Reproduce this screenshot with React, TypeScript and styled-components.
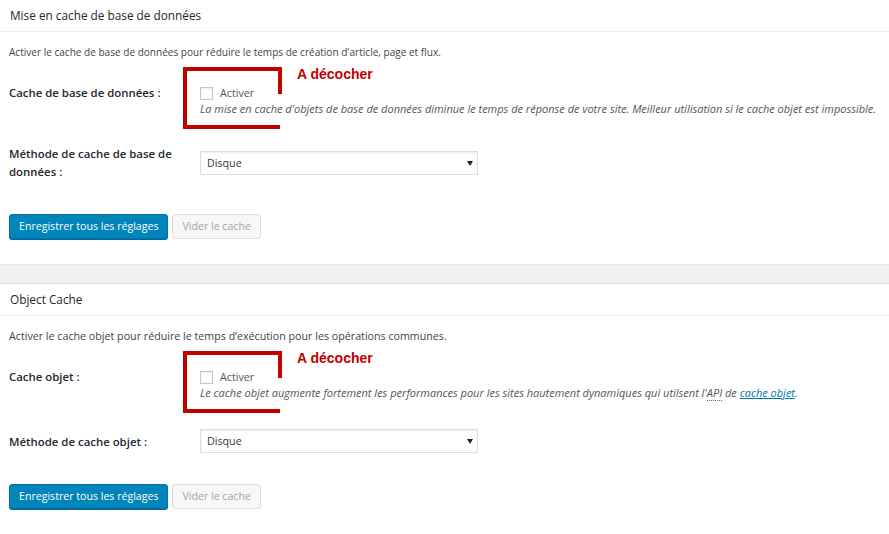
import React from "react";
import styled, { createGlobalStyle } from "styled-components";

const GlobalStyle = createGlobalStyle`
  html, body {
    margin: 0;
    padding: 0;
    background: #ffffff;
  }
  body {
    font-family: "Open Sans", "Noto Sans", sans-serif;
    color: #444;
  }
`;

const Page = styled.div`
  width: 889px;
  background: #f1f1f1;
  display: flex;
  flex-direction: column;
  gap: 18px;
`;

const Postbox = styled.section`
  background: #fff;
  border-top: 1px solid #e2e2e2;
  border-bottom: 1px solid #e8e8e8;
  &:first-child {
    border-top: 0;
  }
`;

const Header = styled.h3`
  margin: 0;
  height: 31px;
  line-height: 31px;
  padding: 0 10px;
  font-size: 11.8px;
  font-weight: 400;
  color: #23282d;
  border-bottom: 1px solid #eee;
`;

const Inside = styled.div`
  padding: 0 9px 25px;
`;

const Intro = styled.p<{ $size: number }>`
  margin: 11px 0 0;
  line-height: 18px;
  font-size: ${(p) => p.$size}px;
  color: #444;
`;

const Row = styled.div<{ $align: "flex-start" | "center"; $gap: number }>`
  display: flex;
  align-items: ${(p) => p.$align};
  margin-top: ${(p) => p.$gap}px;
`;

const Label = styled.div<{ $lh: number }>`
  width: 191px;
  flex: none;
  box-sizing: border-box;
  padding-right: 16px;
  font-size: 11.4px;
  font-weight: 600;
  line-height: ${(p) => p.$lh}px;
  color: #23282d;
`;

const Field = styled.div`
  position: relative;
  flex: 1;
  font-size: 10.7px;
  line-height: 16px;
`;

const CheckLine = styled.label`
  display: flex;
  align-items: center;
  gap: 7px;
  color: #555;
`;

const Checkbox = styled.input`
  appearance: none;
  margin: 0;
  width: 13px;
  height: 13px;
  border: 1px solid #c3c7cb;
  background: #fff;
  box-shadow: inset 0 1px 2px rgba(0, 0, 0, 0.08);
`;

const Hint = styled.p`
  margin: 0;
  font-size: 11px;
  font-style: italic;
  color: #555;
  white-space: nowrap;
`;

const Abbr = styled.abbr`
  text-decoration: none;
  border-bottom: 1px dotted #666;
`;

const Link = styled.a`
  color: #0073aa;
  text-decoration: underline;
`;

const SelectWrap = styled.div`
  position: relative;
  width: 278px;
`;

const Select = styled.select`
  appearance: none;
  display: block;
  width: 100%;
  height: 24px;
  margin: 0;
  padding: 0 6px;
  border: 1px solid #ddd;
  border-radius: 0;
  background: #fff;
  box-shadow: inset 0 1px 2px rgba(0, 0, 0, 0.07);
  font-family: "Open Sans", "Noto Sans", sans-serif;
  font-size: 10.7px;
  color: #32373c;
`;

const Arrow = styled.span`
  position: absolute;
  right: 5px;
  top: 10px;
  width: 0;
  height: 0;
  border-left: 3px solid transparent;
  border-right: 3px solid transparent;
  border-top: 5px solid #222;
  pointer-events: none;
`;

const Actions = styled.div<{ $gap: number }>`
  display: flex;
  gap: 4px;
  margin-top: ${(p) => p.$gap}px;
`;

const Button = styled.button<{ $primary?: boolean }>`
  height: 25px;
  margin: 0;
  padding: 0 9px;
  border-radius: 3px;
  font-family: "Open Sans", "Noto Sans", sans-serif;
  font-size: 10.6px;
  line-height: 23px;
  border: 1px solid ${(p) => (p.$primary ? "#0073aa" : "#ddd")};
  background: ${(p) => (p.$primary ? "#0085ba" : "#f7f7f7")};
  color: ${(p) => (p.$primary ? "#fff" : "#a0a5aa")};
  box-shadow: ${(p) => (p.$primary ? "0 1px 0 #006799" : "none")};
`;

const Annotation = styled.div`
  position: absolute;
  left: -17px;
  top: -18px;
  display: flex;
  align-items: flex-start;
  gap: 14px;
  pointer-events: none;
`;

const Note = styled.span`
  margin-top: -1px;
  font-family: "Liberation Sans", Arial, sans-serif;
  font-size: 14px;
  font-weight: 700;
  font-style: normal;
  line-height: 16px;
  color: #c00000;
  white-space: nowrap;
`;

const Bracket = () => (
  <svg width="100" height="63" viewBox="0 0 100 63">
    <path
      d="M97 27 V2 H2 V60 H97"
      fill="none"
      stroke="#c20000"
      strokeWidth="4"
      strokeLinejoin="miter"
    />
  </svg>
);

interface SectionProps {
  title: string;
  intro: string;
  introSize: number;
  checkLabel: string;
  hint: React.ReactNode;
  methodLabel: string;
  wraps: boolean;
  actionsGap: number;
}

const CacheSection: React.FC<SectionProps> = ({
  title,
  intro,
  introSize,
  checkLabel,
  hint,
  methodLabel,
  wraps,
  actionsGap,
}) => (
  <Postbox>
    <Header>{title}</Header>
    <Inside>
      <Intro $size={introSize}>{intro}</Intro>
      <Row $align="flex-start" $gap={24}>
        <Label $lh={16}>{checkLabel}</Label>
        <Field>
          <CheckLine>
            <Checkbox type="checkbox" />
            Activer
          </CheckLine>
          <Hint>{hint}</Hint>
          <Annotation>
            <Bracket />
            <Note>A décocher</Note>
          </Annotation>
        </Field>
      </Row>
      <Row $align="center" $gap={28}>
        <Label $lh={wraps ? 18 : 17}>{methodLabel}</Label>
        <Field>
          <SelectWrap>
            <Select defaultValue="disk">
              <option value="disk">Disque</option>
            </Select>
            <Arrow />
          </SelectWrap>
        </Field>
      </Row>
      <Actions $gap={actionsGap}>
        <Button $primary>Enregistrer tous les réglages</Button>
        <Button disabled>Vider le cache</Button>
      </Actions>
    </Inside>
  </Postbox>
);

export default function App() {
  return (
    <>
      <GlobalStyle />
      <Page>
        <CacheSection
          title="Mise en cache de base de données"
          intro="Activer le cache de base de données pour réduire le temps de création d'article, page et flux."
          introSize={10.05}
          checkLabel="Cache de base de données :"
          hint="La mise en cache d'objets de base de données diminue le temps de réponse de votre site. Meilleur utilisation si le cache objet est impossible."
          methodLabel="Méthode de cache de base de données :"
          wraps
          actionsGap={33}
        />
        <CacheSection
          title="Object Cache"
          intro="Activer le cache objet pour réduire le temps d’exécution pour les opérations communes."
          introSize={10.7}
          checkLabel="Cache objet :"
          hint={
            <>
              Le cache objet augmente fortement les performances pour les sites
              hautement dynamiques qui utilsent l'<Abbr>API</Abbr> de{" "}
              <Link href="#">cache objet</Link>.
            </>
          }
          methodLabel="Méthode de cache objet :"
          wraps={false}
          actionsGap={31}
        />
      </Page>
    </>
  );
}
